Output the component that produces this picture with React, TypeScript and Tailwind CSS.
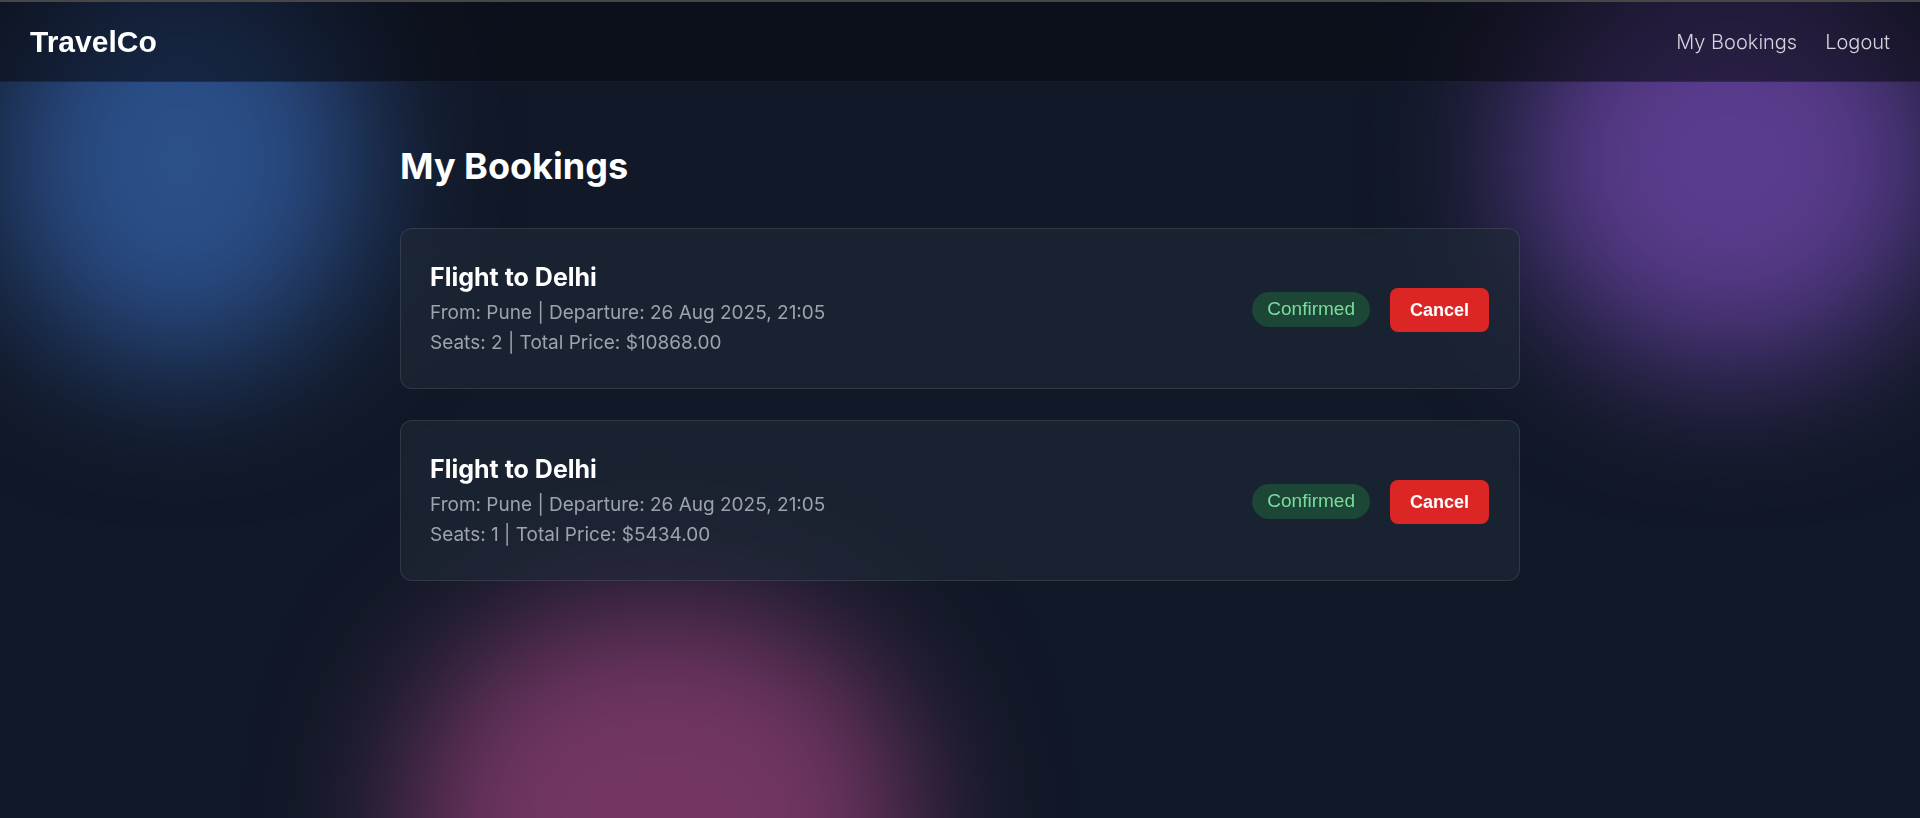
import React from "react";

const bookings = [
  { id: 1, dest: "Delhi", from: "Pune", dep: "26 Aug 2025, 21:05", seats: 2, price: "10868.00" },
  { id: 2, dest: "Delhi", from: "Pune", dep: "26 Aug 2025, 21:05", seats: 1, price: "5434.00" },
];

export default function App() {
  return (
    <div className="relative min-h-screen overflow-hidden border-t-2 border-[#474747] bg-[#111827] font-['Inter',sans-serif] text-white">
      {/* background blobs */}
      <div className="pointer-events-none absolute left-0 top-[-50px] h-[415px] w-[360px] rounded-full bg-[#2b4f8a] blur-[70px]" />
      <div className="pointer-events-none absolute left-[1515px] top-[-50px] h-[415px] w-[430px] rounded-full bg-[#5a3c8e] blur-[70px]" />
      <div className="pointer-events-none absolute left-[405px] top-[600px] h-[440px] w-[510px] rounded-full bg-[#733664] blur-[70px]" />

      <header className="relative z-10 flex h-20 items-center justify-between border-b border-white/5 bg-[#0a0c14]/60 px-[30px] backdrop-blur-md">
        <div className="font-['Liberation_Sans',Arial,sans-serif] text-[30px] font-bold leading-none text-white">TravelCo</div>
        <nav className="flex items-center gap-7 text-xl font-light text-[#d3d5de]">
          <a href="#" className="hover:text-white">My Bookings</a>
          <a href="#" className="hover:text-white">Logout</a>
        </nav>
      </header>

      <main className="relative z-10 mx-auto max-w-6xl px-4 pt-16">
        <h1 className="mb-[42px] text-4xl font-bold">My Bookings</h1>
        <div className="flex flex-col gap-[31px]">
          {bookings.map((b) => (
            <div
              key={b.id}
              className="flex items-center justify-between rounded-xl border border-white/10 bg-[#1f2937]/60 pb-[30px] pl-[29px] pr-[30px] pt-8 backdrop-blur-sm"
            >
              <div>
                <h2 className="text-[25px] font-bold leading-8">Flight to {b.dest}</h2>
                <p className="mt-[5px] text-[19px] font-normal leading-[30px] text-[#9ca3af]">
                  From: {b.from} | Departure: {b.dep}
                </p>
                <p className="text-[19px] font-normal leading-[30px] text-[#9ca3af]">
                  Seats: {b.seats} | Total Price: ${b.price}
                </p>
              </div>
              <div className="flex items-center gap-5 font-['Liberation_Sans',Arial,sans-serif]">
                <span className="flex h-[35px] items-center rounded-full bg-[#1c4636] px-[15px] text-[19px] text-[#79dd9f]">
                  Confirmed
                </span>
                <button className="rounded-lg bg-[#dc2626] px-5 py-2 text-lg font-bold leading-7 text-white">
                  Cancel
                </button>
              </div>
            </div>
          ))}
        </div>
      </main>
    </div>
  );
}
